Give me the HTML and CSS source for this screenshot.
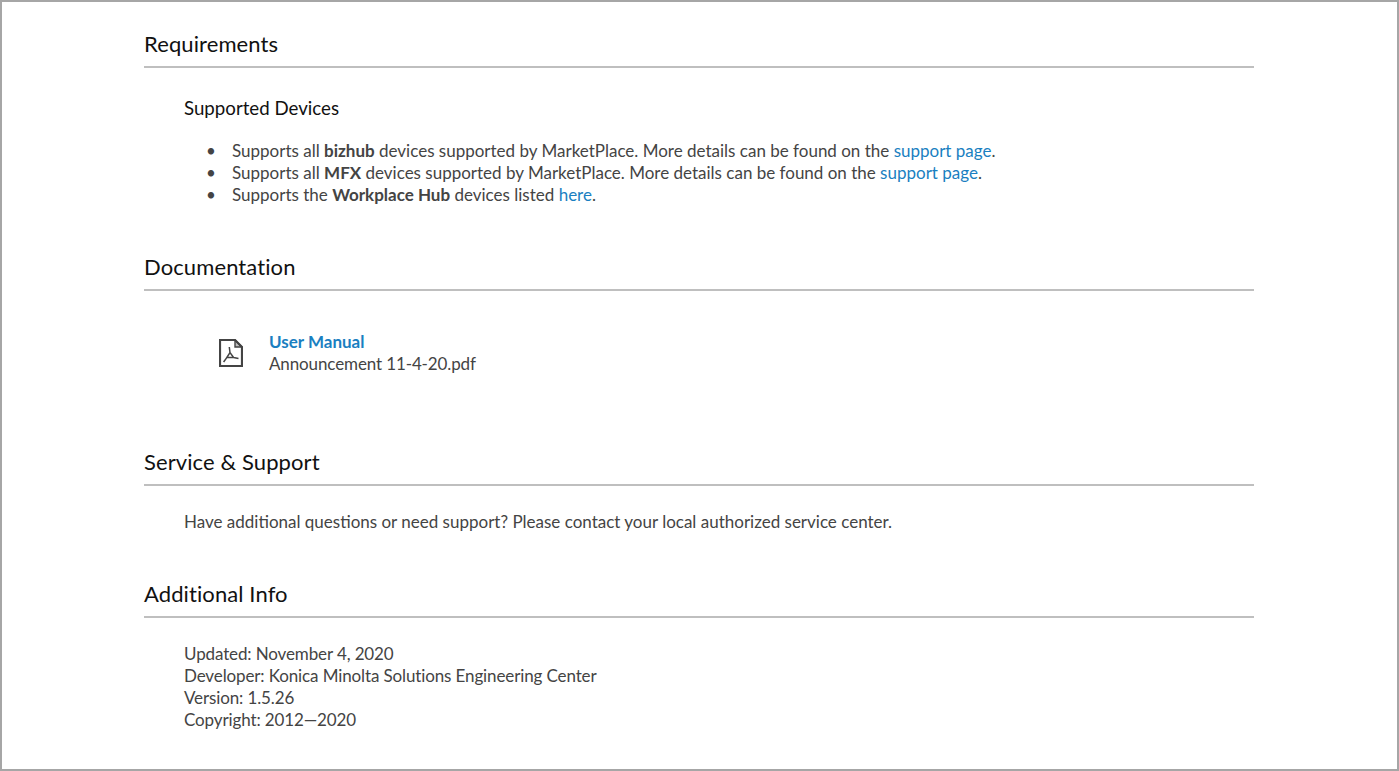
FILE: index.html
```html
<!DOCTYPE html>
<html lang="en">
<head>
<meta charset="utf-8">
<title>App details</title>
<link rel="stylesheet" href="styles.css">
</head>
<body>
<main class="frame">
  <section class="section requirements">
    <h2 class="heading">Requirements</h2>
    <div class="body">
      <h3 class="subheading">Supported Devices</h3>
      <ul class="list">
        <li>Supports all <b>bizhub</b> devices supported by MarketPlace. More details can be found on the <a href="#">support page</a>.</li>
        <li>Supports all <b>MFX</b> devices supported by MarketPlace. More details can be found on the <a href="#">support page</a>.</li>
        <li>Supports the <b>Workplace Hub</b> devices listed <a href="#">here</a>.</li>
      </ul>
    </div>
  </section>
  <section class="section documentation">
    <h2 class="heading">Documentation</h2>
    <div class="doc">
      <svg class="doc-icon" viewBox="0 0 24 28" width="24" height="28" aria-hidden="true">
        <path d="M1 1H16L23 8V27H1Z" fill="none" stroke="#444" stroke-width="2.2"/>
        <path d="M16 1V8H23Z" fill="#444" fill-opacity=".35" stroke="#444" stroke-width="1.4"/>
        <path d="M7.8 18.6H14.6L11 13.6Z M11 13.6L10.3 8 M7.8 18.6L4.6 23 M14.6 18.6L19.5 19.6" fill="none" stroke="#444" stroke-width="1.5"/>
      </svg>
      <div class="doc-text">
        <a class="doc-link" href="#">User Manual</a>
        <div class="tight">Announcement 11-4-20.pdf</div>
      </div>
    </div>
  </section>
  <section class="section service">
    <h2 class="heading">Service &amp; Support</h2>
    <p class="para">Have additional questions or need support? Please contact your local authorized service center.</p>
  </section>
  <section class="section info">
    <h2 class="heading">Additional Info</h2>
    <div class="para tight">
      <div>Updated: November 4, 2020</div>
      <div>Developer: Konica Minolta Solutions Engineering Center</div>
      <div>Version: 1.5.26</div>
      <div>Copyright: 2012—2020</div>
    </div>
  </section>
</main>
</body>
</html>
```
FILE: styles.css
```css
* { box-sizing: border-box; }
html, body { margin: 0; padding: 0; background: #fff; }
body {
  font-family: "Lato", "Liberation Sans", sans-serif;
  font-size: 17px;
  line-height: 22px;
  color: #444;
}
.frame {
  height: 771px;
  border: 2px solid #a6a6a6;
  padding: 26px 143px 0 142px;
  overflow: hidden;
}
.section { margin: 0; }
.heading {
  margin: 0;
  height: 40px;
  padding-top: 1px;
  border-bottom: 2px solid #bfbfbf;
  font-size: 22px;
  line-height: 30px;
  letter-spacing: 0.1px;
  font-weight: 400;
  color: #111;
}
.body { padding: 28px 0 0 40px; }
.subheading {
  margin: 0 0 20px;
  font-size: 18.7px;
  line-height: 24px;
  font-weight: 400;
  color: #111;
}
.list { margin: 0; padding: 0 0 0 48px; list-style: none; }
.list li::before {
  content: "•";
  display: inline-block;
  width: 26px;
  margin-left: -26px;
}
.documentation { margin-top: 45px; }
.doc { display: flex; align-items: center; gap: 26px; padding: 40px 0 0 75px; }
.doc-icon { flex: none; }
.service { margin-top: 71px; }
.info { margin-top: 45px; }
.para { margin: 0; padding: 25px 0 0 40px; }
.tight { letter-spacing: -0.12px; }
a { color: #1a7fc1; text-decoration: none; }
b { font-weight: 700; }
.doc-link { font-weight: 700; }
```
